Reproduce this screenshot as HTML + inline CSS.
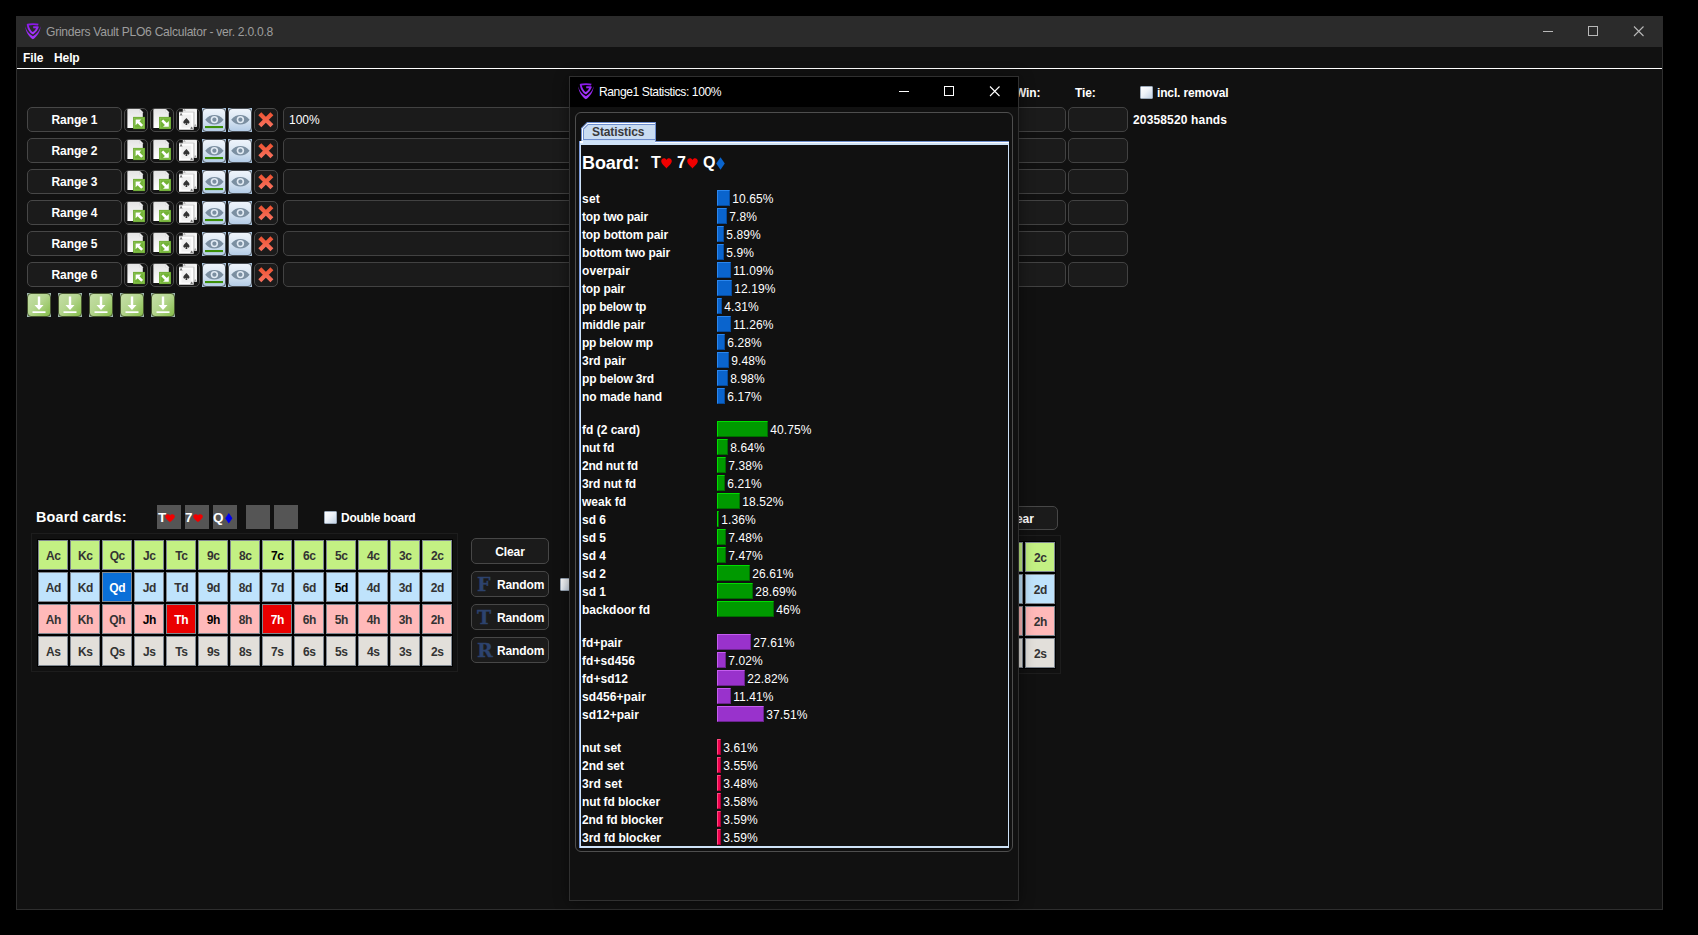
<!DOCTYPE html><html lang="en"><head><meta charset="utf-8"><title>Grinders Vault PLO6 Calculator</title><style>
*{box-sizing:border-box;margin:0;padding:0}
html,body{width:1698px;height:935px;overflow:hidden;background:#000}
body{position:relative;font-family:"Liberation Sans",sans-serif;font-size:12px;color:#fff;line-height:1}
.a{position:absolute}
.b{font-weight:bold;letter-spacing:-.1px}
.t{position:absolute;white-space:nowrap;line-height:14px;height:14px}
#win{position:absolute;left:16px;top:16px;width:1647px;height:894px;background:#111;border:1px solid #2e2e2e;border-top:none}
#tb{position:absolute;left:16px;top:16px;width:1647px;height:31px;background:#2b2b2b}
#ttl{position:absolute;left:46px;top:25px;font-size:12.1px;letter-spacing:-.27px;color:#9d9d9d;white-space:nowrap;line-height:14px}
#mline{position:absolute;left:17px;top:68px;width:1645px;height:1px;background:#fff}
.btn{position:absolute;padding-top:1px;letter-spacing:-.12px;background:#1b1b1b;border:1px solid #474747;border-radius:5px;font-weight:bold;text-align:center;white-space:nowrap}
.fld{position:absolute;background:#1b1b1b;border:1px solid #424242;border-radius:5px;height:25px}
.ib{position:absolute;width:24px;height:24px;border:1px solid #4a4a4a;border-radius:5px;background:#151515;overflow:hidden}
.eb{position:absolute;width:24px;height:24px;background:#a9c4de}
.eb i{position:absolute;left:0;top:0;width:24px;height:24px;border:1px solid #4a4f55;border-radius:4px;background:linear-gradient(#eef4fb,#dbe7f3 45%,#b4cce6)}
.gb{position:absolute;width:24px;height:24px;background:#9fb7b0}
.gb i{position:absolute;left:0;top:0;width:24px;height:24px;border:1px solid #46552f;border-radius:4px;background:linear-gradient(135deg,#c4dea6 0%,#b5d690 45%,#86bd4a 100%)}
svg{position:absolute;left:0;top:0;overflow:visible}
.cb{position:absolute;width:13px;height:13px;border:1px solid #9aa8b8;border-radius:1px;background:linear-gradient(135deg,#ffffff 0%,#eef3f9 45%,#c3d3e6 100%)}
.slot{position:absolute;width:24px;height:24px;background:#555;top:505px}
.cd{position:absolute;width:32px;height:32px;border:1px solid #000;font-weight:bold;text-align:center;color:#333}
.cd b{display:block;width:30px;height:30px;border:1px solid #7f8790;line-height:30px;font-size:12px;letter-spacing:-.4px;text-indent:.6px}
.cc b{background:#c3f083}.dd b{background:#bfe3fc}.hh b{background:#ffb9b9}.ss b{background:#e2dfda}
.k{color:#000}
#dlg{position:absolute;left:569px;top:76px;width:450px;height:825px;background:#111;border:1px solid #303030;box-shadow:0 2px 14px rgba(0,0,0,.45)}
#dtb{position:absolute;left:570px;top:77px;width:448px;height:30px;background:#000}
#dpn{position:absolute;left:575px;top:112px;width:438px;height:740px;border:1px solid #4e4e4e;border-radius:6px}
.lb{position:absolute;left:582px;letter-spacing:-.07px;font-weight:bold;white-space:nowrap;line-height:14px;height:14px}
.vl{position:absolute;letter-spacing:.22px;white-space:nowrap;line-height:14px;height:14px}
.bar{position:absolute;left:717px;height:16px;border-style:solid;border-width:1px}
.b1{background:#0a64cd;border-color:#2a86ee #074a9a #074a9a #2a86ee}
.b2{background:#009900;border-color:#00dd00 #006b00 #006b00 #00dd00}
.b3{background:#9932cc;border-color:#c45cf0 #6b238e #6b238e #c45cf0}
.b4{background:#f0004e;border-color:#ff4a80 #a80036 #a80036 #ff4a80}
</style></head><body>
<div id="win"></div><div id="tb"></div>
<svg class="a" style="left:25px;top:23px" width="16" height="17" viewBox="0 0 16 17"><defs><linearGradient id="lg1" x1="0" y1="0" x2="0" y2="1"><stop offset="0" stop-color="#8a18e8"/><stop offset="1" stop-color="#a638ff"/></linearGradient></defs><path d="M0.2 3.2 C1.2 7.5 3.8 11 7.9 13.2 C12 11 14.6 7.5 15.7 3.2 C15.2 8.6 12.4 13.4 7.9 16.3 C3.4 13.4 0.7 8.6 0.2 3.2Z" fill="url(#lg1)"/><path d="M13.3 1.6 C11.5 0.9 4.5 0.9 2.7 1.6 C3.3 5.6 5 8.6 7.9 10.4 C10.2 9 11.8 6.8 12.8 4.200 L8.200 4.200" fill="none" stroke="url(#lg1)" stroke-width="1.9" stroke-linejoin="round"/></svg>
<div id="ttl">Grinders Vault PLO6 Calculator - ver. 2.0.0.8</div>
<svg class="a" style="left:1530px;top:16px" width="133" height="31" viewBox="0 0 133 31"><g stroke="#b8b8b8" stroke-width="1" fill="none" shape-rendering="crispEdges"><path d="M13 15.5h10"/><rect x="58.5" y="10.5" width="9" height="9"/></g><path d="M104 10.5l9.5 9.5M113.5 10.5l-9.5 9.5" stroke="#b8b8b8" stroke-width="1.1" fill="none"/></svg>
<div class="t b" style="left:23px;top:51px">File</div><div class="t b" style="left:54px;top:51px">Help</div>
<div id="mline"></div>
<div class="btn" style="left:27px;top:107px;width:95px;height:25px;line-height:23px">Range 1</div>
<div class="ib" style="left:124px;top:108px"><svg width="22" height="22" viewBox="0 0 22 22"><defs><linearGradient id="dg" x1="0" y1="0" x2="0" y2="1"><stop offset="0" stop-color="#e4e4e4"/><stop offset="1" stop-color="#fefefe"/></linearGradient></defs><path d="M2.400 0h12.200l3.200 3.200v15.800h-15.400z" fill="url(#dg)"/><path d="M14.600 0v3.200h3.200z" fill="#f6f6f6" stroke="#cfcfcf" stroke-width=".5"/><rect x="8.100" y="7.900" width="11.900" height="12.200" fill="#65a52b"/><rect x="9.200" y="9" width="9.700" height="10" fill="#72b336" stroke="#93c95c" stroke-width=".7"/><path d="M10.600 10.400h5.800l-1.900 1.900 3.600 3.600-1.900 1.900-3.600-3.600-2 2z" fill="#fff"/></svg></div>
<div class="ib" style="left:150px;top:108px"><svg width="22" height="22" viewBox="0 0 22 22"><defs><linearGradient id="dg" x1="0" y1="0" x2="0" y2="1"><stop offset="0" stop-color="#e4e4e4"/><stop offset="1" stop-color="#fefefe"/></linearGradient></defs><path d="M2.400 0h12.200l3.200 3.200v15.800h-15.400z" fill="url(#dg)"/><path d="M14.600 0v3.200h3.200z" fill="#f6f6f6" stroke="#cfcfcf" stroke-width=".5"/><rect x="8.100" y="7.900" width="11.900" height="12.200" fill="#65a52b"/><rect x="9.200" y="9" width="9.700" height="10" fill="#72b336" stroke="#93c95c" stroke-width=".7"/><path d="M17.800 17.800h-5.800l1.900-1.900-3.600-3.600 1.900-1.900 3.600 3.600 2-2z" fill="#fff"/></svg></div>
<div class="ib" style="left:176px;top:108px"><svg width="22" height="22" viewBox="0 0 22 22"><path d="M5.800 -.3h14v18h-14z" fill="#efefef"/><path d="M18.400 -.3h1.400v18h-1.400z" fill="#fafafa"/><path d="M2 3.300h14.700v17.500h-14.700z" fill="#fdfdfd"/><path d="M16.900 3v15" stroke="#b9b9b9" stroke-width=".9"/><path d="M2 3.100h15" stroke="#c8c8c8" stroke-width=".7"/><rect x="4.500" y="5.600" width="9.800" height="13" fill="#f0f0f0"/><path d="M9.400 9c1.500 1.700 3.100 2.900 3.100 4.200 0 1-.9 1.600-1.800 1.400-.4-.1-.7-.3-.9-.6l.6 2h-2l.6-2c-.2.300-.5.500-.9.600-.9.200-1.800-.4-1.800-1.400 0-1.300 1.600-2.500 3.100-4.200z" fill="#333"/><path d="M3.200 6.600l.9-2.200.9 2.200M3.500 5.900h1.200" stroke="#555" stroke-width=".7" fill="none"/><path d="M13.700 20.100l.9-2.200.9 2.200M14 19.400h1.200" stroke="#555" stroke-width=".7" fill="none"/><path d="M17.600 17.400l.7-1.800.7 1.800" stroke="#777" stroke-width=".6" fill="none"/><path d="M6.600 2.100l.8-1.700.8 1.700" stroke="#888" stroke-width=".6" fill="none"/></svg></div>
<div class="eb" style="left:202px;top:108px"><i></i><svg width="24" height="24" viewBox="0 0 24 24"><path d="M3.200 11.700C6 8.200 9 7 12.400 7s6.400 1.200 9.200 4.700c-2.800 3.500-5.800 4.700-9.200 4.700s-6.400-1.200-9.200-4.700z" fill="#7b8fa1"/><circle cx="12.400" cy="11.600" r="3.700" fill="#e2ebf4"/><circle cx="12.400" cy="11.700" r="2.100" fill="#7b8fa1"/><rect x="3" y="18" width="18" height="2.100" fill="#3c8f0a"/></svg></div>
<div class="eb" style="left:228px;top:108px"><i></i><svg width="24" height="24" viewBox="0 0 24 24"><path d="M3.200 11.700C6 8.200 9 7 12.400 7s6.400 1.200 9.200 4.700c-2.800 3.500-5.800 4.700-9.200 4.700s-6.400-1.200-9.200-4.700z" fill="#7b8fa1"/><circle cx="12.400" cy="11.600" r="3.700" fill="#e2ebf4"/><circle cx="12.400" cy="11.700" r="2.100" fill="#7b8fa1"/></svg></div>
<div class="ib" style="left:254px;top:108px;background:#1b1b1b"><svg width="22" height="22" viewBox="0 0 22 22"><defs><linearGradient id="xg" x1="0" y1="0" x2="0" y2="1"><stop offset="0" stop-color="#ee5535"/><stop offset="1" stop-color="#f8705c"/></linearGradient></defs><path d="M4.800 4.700l12.100 12.100M16.900 4.700l-12.100 12.100" stroke="url(#xg)" stroke-width="4.200" fill="none"/></svg></div>
<div class="fld" style="left:283px;top:107px;width:720px"></div>
<div class="fld" style="left:1006px;top:107px;width:60px"></div>
<div class="fld" style="left:1068px;top:107px;width:60px"></div>
<div class="btn" style="left:27px;top:138px;width:95px;height:25px;line-height:23px">Range 2</div>
<div class="ib" style="left:124px;top:139px"><svg width="22" height="22" viewBox="0 0 22 22"><defs><linearGradient id="dg" x1="0" y1="0" x2="0" y2="1"><stop offset="0" stop-color="#e4e4e4"/><stop offset="1" stop-color="#fefefe"/></linearGradient></defs><path d="M2.400 0h12.200l3.200 3.200v15.800h-15.400z" fill="url(#dg)"/><path d="M14.600 0v3.200h3.200z" fill="#f6f6f6" stroke="#cfcfcf" stroke-width=".5"/><rect x="8.100" y="7.900" width="11.900" height="12.200" fill="#65a52b"/><rect x="9.200" y="9" width="9.700" height="10" fill="#72b336" stroke="#93c95c" stroke-width=".7"/><path d="M10.600 10.400h5.800l-1.900 1.900 3.600 3.600-1.900 1.900-3.600-3.600-2 2z" fill="#fff"/></svg></div>
<div class="ib" style="left:150px;top:139px"><svg width="22" height="22" viewBox="0 0 22 22"><defs><linearGradient id="dg" x1="0" y1="0" x2="0" y2="1"><stop offset="0" stop-color="#e4e4e4"/><stop offset="1" stop-color="#fefefe"/></linearGradient></defs><path d="M2.400 0h12.200l3.200 3.200v15.800h-15.400z" fill="url(#dg)"/><path d="M14.600 0v3.200h3.200z" fill="#f6f6f6" stroke="#cfcfcf" stroke-width=".5"/><rect x="8.100" y="7.900" width="11.900" height="12.200" fill="#65a52b"/><rect x="9.200" y="9" width="9.700" height="10" fill="#72b336" stroke="#93c95c" stroke-width=".7"/><path d="M17.800 17.800h-5.800l1.900-1.900-3.600-3.600 1.900-1.900 3.600 3.600 2-2z" fill="#fff"/></svg></div>
<div class="ib" style="left:176px;top:139px"><svg width="22" height="22" viewBox="0 0 22 22"><path d="M5.800 -.3h14v18h-14z" fill="#efefef"/><path d="M18.400 -.3h1.400v18h-1.400z" fill="#fafafa"/><path d="M2 3.300h14.700v17.500h-14.700z" fill="#fdfdfd"/><path d="M16.900 3v15" stroke="#b9b9b9" stroke-width=".9"/><path d="M2 3.100h15" stroke="#c8c8c8" stroke-width=".7"/><rect x="4.500" y="5.600" width="9.800" height="13" fill="#f0f0f0"/><path d="M9.400 9c1.500 1.700 3.100 2.900 3.100 4.200 0 1-.9 1.600-1.800 1.400-.4-.1-.7-.3-.9-.6l.6 2h-2l.6-2c-.2.300-.5.500-.9.600-.9.200-1.800-.4-1.800-1.400 0-1.300 1.600-2.500 3.100-4.200z" fill="#333"/><path d="M3.200 6.600l.9-2.200.9 2.200M3.500 5.900h1.200" stroke="#555" stroke-width=".7" fill="none"/><path d="M13.700 20.100l.9-2.200.9 2.200M14 19.400h1.200" stroke="#555" stroke-width=".7" fill="none"/><path d="M17.600 17.400l.7-1.800.7 1.800" stroke="#777" stroke-width=".6" fill="none"/><path d="M6.600 2.100l.8-1.700.8 1.700" stroke="#888" stroke-width=".6" fill="none"/></svg></div>
<div class="eb" style="left:202px;top:139px"><i></i><svg width="24" height="24" viewBox="0 0 24 24"><path d="M3.200 11.700C6 8.200 9 7 12.400 7s6.400 1.200 9.200 4.700c-2.800 3.500-5.800 4.700-9.200 4.700s-6.400-1.200-9.200-4.700z" fill="#7b8fa1"/><circle cx="12.400" cy="11.600" r="3.700" fill="#e2ebf4"/><circle cx="12.400" cy="11.700" r="2.100" fill="#7b8fa1"/><rect x="3" y="18" width="18" height="2.100" fill="#3c8f0a"/></svg></div>
<div class="eb" style="left:228px;top:139px"><i></i><svg width="24" height="24" viewBox="0 0 24 24"><path d="M3.200 11.700C6 8.200 9 7 12.400 7s6.400 1.200 9.200 4.700c-2.800 3.500-5.800 4.700-9.200 4.700s-6.400-1.200-9.200-4.700z" fill="#7b8fa1"/><circle cx="12.400" cy="11.600" r="3.700" fill="#e2ebf4"/><circle cx="12.400" cy="11.700" r="2.100" fill="#7b8fa1"/></svg></div>
<div class="ib" style="left:254px;top:139px;background:#1b1b1b"><svg width="22" height="22" viewBox="0 0 22 22"><defs><linearGradient id="xg" x1="0" y1="0" x2="0" y2="1"><stop offset="0" stop-color="#ee5535"/><stop offset="1" stop-color="#f8705c"/></linearGradient></defs><path d="M4.800 4.700l12.100 12.100M16.900 4.700l-12.100 12.100" stroke="url(#xg)" stroke-width="4.200" fill="none"/></svg></div>
<div class="fld" style="left:283px;top:138px;width:720px"></div>
<div class="fld" style="left:1006px;top:138px;width:60px"></div>
<div class="fld" style="left:1068px;top:138px;width:60px"></div>
<div class="btn" style="left:27px;top:169px;width:95px;height:25px;line-height:23px">Range 3</div>
<div class="ib" style="left:124px;top:170px"><svg width="22" height="22" viewBox="0 0 22 22"><defs><linearGradient id="dg" x1="0" y1="0" x2="0" y2="1"><stop offset="0" stop-color="#e4e4e4"/><stop offset="1" stop-color="#fefefe"/></linearGradient></defs><path d="M2.400 0h12.200l3.200 3.200v15.800h-15.400z" fill="url(#dg)"/><path d="M14.600 0v3.200h3.200z" fill="#f6f6f6" stroke="#cfcfcf" stroke-width=".5"/><rect x="8.100" y="7.900" width="11.900" height="12.200" fill="#65a52b"/><rect x="9.200" y="9" width="9.700" height="10" fill="#72b336" stroke="#93c95c" stroke-width=".7"/><path d="M10.600 10.400h5.800l-1.900 1.900 3.600 3.600-1.900 1.900-3.600-3.600-2 2z" fill="#fff"/></svg></div>
<div class="ib" style="left:150px;top:170px"><svg width="22" height="22" viewBox="0 0 22 22"><defs><linearGradient id="dg" x1="0" y1="0" x2="0" y2="1"><stop offset="0" stop-color="#e4e4e4"/><stop offset="1" stop-color="#fefefe"/></linearGradient></defs><path d="M2.400 0h12.200l3.200 3.200v15.800h-15.400z" fill="url(#dg)"/><path d="M14.600 0v3.200h3.200z" fill="#f6f6f6" stroke="#cfcfcf" stroke-width=".5"/><rect x="8.100" y="7.900" width="11.900" height="12.200" fill="#65a52b"/><rect x="9.200" y="9" width="9.700" height="10" fill="#72b336" stroke="#93c95c" stroke-width=".7"/><path d="M17.800 17.800h-5.800l1.900-1.900-3.600-3.600 1.900-1.900 3.600 3.600 2-2z" fill="#fff"/></svg></div>
<div class="ib" style="left:176px;top:170px"><svg width="22" height="22" viewBox="0 0 22 22"><path d="M5.800 -.3h14v18h-14z" fill="#efefef"/><path d="M18.400 -.3h1.400v18h-1.400z" fill="#fafafa"/><path d="M2 3.300h14.700v17.500h-14.700z" fill="#fdfdfd"/><path d="M16.900 3v15" stroke="#b9b9b9" stroke-width=".9"/><path d="M2 3.100h15" stroke="#c8c8c8" stroke-width=".7"/><rect x="4.500" y="5.600" width="9.800" height="13" fill="#f0f0f0"/><path d="M9.400 9c1.500 1.700 3.100 2.900 3.100 4.200 0 1-.9 1.600-1.800 1.400-.4-.1-.7-.3-.9-.6l.6 2h-2l.6-2c-.2.300-.5.500-.9.600-.9.200-1.800-.4-1.800-1.400 0-1.300 1.600-2.500 3.100-4.200z" fill="#333"/><path d="M3.200 6.600l.9-2.200.9 2.200M3.500 5.900h1.200" stroke="#555" stroke-width=".7" fill="none"/><path d="M13.700 20.100l.9-2.200.9 2.200M14 19.400h1.200" stroke="#555" stroke-width=".7" fill="none"/><path d="M17.600 17.400l.7-1.800.7 1.800" stroke="#777" stroke-width=".6" fill="none"/><path d="M6.600 2.100l.8-1.700.8 1.700" stroke="#888" stroke-width=".6" fill="none"/></svg></div>
<div class="eb" style="left:202px;top:170px"><i></i><svg width="24" height="24" viewBox="0 0 24 24"><path d="M3.200 11.700C6 8.200 9 7 12.400 7s6.400 1.200 9.200 4.700c-2.800 3.500-5.800 4.700-9.200 4.700s-6.400-1.200-9.200-4.700z" fill="#7b8fa1"/><circle cx="12.400" cy="11.600" r="3.700" fill="#e2ebf4"/><circle cx="12.400" cy="11.700" r="2.100" fill="#7b8fa1"/><rect x="3" y="18" width="18" height="2.100" fill="#3c8f0a"/></svg></div>
<div class="eb" style="left:228px;top:170px"><i></i><svg width="24" height="24" viewBox="0 0 24 24"><path d="M3.200 11.700C6 8.200 9 7 12.400 7s6.400 1.200 9.200 4.700c-2.800 3.500-5.800 4.700-9.200 4.700s-6.400-1.200-9.200-4.700z" fill="#7b8fa1"/><circle cx="12.400" cy="11.600" r="3.700" fill="#e2ebf4"/><circle cx="12.400" cy="11.700" r="2.100" fill="#7b8fa1"/></svg></div>
<div class="ib" style="left:254px;top:170px;background:#1b1b1b"><svg width="22" height="22" viewBox="0 0 22 22"><defs><linearGradient id="xg" x1="0" y1="0" x2="0" y2="1"><stop offset="0" stop-color="#ee5535"/><stop offset="1" stop-color="#f8705c"/></linearGradient></defs><path d="M4.800 4.700l12.100 12.100M16.900 4.700l-12.100 12.100" stroke="url(#xg)" stroke-width="4.200" fill="none"/></svg></div>
<div class="fld" style="left:283px;top:169px;width:720px"></div>
<div class="fld" style="left:1006px;top:169px;width:60px"></div>
<div class="fld" style="left:1068px;top:169px;width:60px"></div>
<div class="btn" style="left:27px;top:200px;width:95px;height:25px;line-height:23px">Range 4</div>
<div class="ib" style="left:124px;top:201px"><svg width="22" height="22" viewBox="0 0 22 22"><defs><linearGradient id="dg" x1="0" y1="0" x2="0" y2="1"><stop offset="0" stop-color="#e4e4e4"/><stop offset="1" stop-color="#fefefe"/></linearGradient></defs><path d="M2.400 0h12.200l3.200 3.200v15.800h-15.400z" fill="url(#dg)"/><path d="M14.600 0v3.200h3.200z" fill="#f6f6f6" stroke="#cfcfcf" stroke-width=".5"/><rect x="8.100" y="7.900" width="11.900" height="12.200" fill="#65a52b"/><rect x="9.200" y="9" width="9.700" height="10" fill="#72b336" stroke="#93c95c" stroke-width=".7"/><path d="M10.600 10.400h5.800l-1.900 1.900 3.600 3.600-1.900 1.900-3.600-3.600-2 2z" fill="#fff"/></svg></div>
<div class="ib" style="left:150px;top:201px"><svg width="22" height="22" viewBox="0 0 22 22"><defs><linearGradient id="dg" x1="0" y1="0" x2="0" y2="1"><stop offset="0" stop-color="#e4e4e4"/><stop offset="1" stop-color="#fefefe"/></linearGradient></defs><path d="M2.400 0h12.200l3.200 3.200v15.800h-15.400z" fill="url(#dg)"/><path d="M14.600 0v3.200h3.200z" fill="#f6f6f6" stroke="#cfcfcf" stroke-width=".5"/><rect x="8.100" y="7.900" width="11.900" height="12.200" fill="#65a52b"/><rect x="9.200" y="9" width="9.700" height="10" fill="#72b336" stroke="#93c95c" stroke-width=".7"/><path d="M17.800 17.800h-5.800l1.900-1.900-3.600-3.600 1.900-1.900 3.600 3.600 2-2z" fill="#fff"/></svg></div>
<div class="ib" style="left:176px;top:201px"><svg width="22" height="22" viewBox="0 0 22 22"><path d="M5.800 -.3h14v18h-14z" fill="#efefef"/><path d="M18.400 -.3h1.400v18h-1.400z" fill="#fafafa"/><path d="M2 3.300h14.700v17.500h-14.700z" fill="#fdfdfd"/><path d="M16.900 3v15" stroke="#b9b9b9" stroke-width=".9"/><path d="M2 3.100h15" stroke="#c8c8c8" stroke-width=".7"/><rect x="4.500" y="5.600" width="9.800" height="13" fill="#f0f0f0"/><path d="M9.400 9c1.500 1.700 3.100 2.900 3.100 4.200 0 1-.9 1.600-1.800 1.400-.4-.1-.7-.3-.9-.6l.6 2h-2l.6-2c-.2.300-.5.500-.9.600-.9.200-1.800-.4-1.800-1.400 0-1.300 1.600-2.500 3.100-4.200z" fill="#333"/><path d="M3.200 6.600l.9-2.200.9 2.200M3.500 5.900h1.200" stroke="#555" stroke-width=".7" fill="none"/><path d="M13.700 20.100l.9-2.200.9 2.200M14 19.400h1.200" stroke="#555" stroke-width=".7" fill="none"/><path d="M17.600 17.400l.7-1.800.7 1.800" stroke="#777" stroke-width=".6" fill="none"/><path d="M6.600 2.100l.8-1.700.8 1.700" stroke="#888" stroke-width=".6" fill="none"/></svg></div>
<div class="eb" style="left:202px;top:201px"><i></i><svg width="24" height="24" viewBox="0 0 24 24"><path d="M3.200 11.700C6 8.200 9 7 12.400 7s6.400 1.200 9.200 4.700c-2.800 3.500-5.800 4.700-9.200 4.700s-6.400-1.200-9.200-4.700z" fill="#7b8fa1"/><circle cx="12.400" cy="11.600" r="3.700" fill="#e2ebf4"/><circle cx="12.400" cy="11.700" r="2.100" fill="#7b8fa1"/><rect x="3" y="18" width="18" height="2.100" fill="#3c8f0a"/></svg></div>
<div class="eb" style="left:228px;top:201px"><i></i><svg width="24" height="24" viewBox="0 0 24 24"><path d="M3.200 11.700C6 8.200 9 7 12.400 7s6.400 1.200 9.200 4.700c-2.800 3.500-5.800 4.700-9.200 4.700s-6.400-1.200-9.200-4.700z" fill="#7b8fa1"/><circle cx="12.400" cy="11.600" r="3.700" fill="#e2ebf4"/><circle cx="12.400" cy="11.700" r="2.100" fill="#7b8fa1"/></svg></div>
<div class="ib" style="left:254px;top:201px;background:#1b1b1b"><svg width="22" height="22" viewBox="0 0 22 22"><defs><linearGradient id="xg" x1="0" y1="0" x2="0" y2="1"><stop offset="0" stop-color="#ee5535"/><stop offset="1" stop-color="#f8705c"/></linearGradient></defs><path d="M4.800 4.700l12.100 12.100M16.900 4.700l-12.100 12.100" stroke="url(#xg)" stroke-width="4.200" fill="none"/></svg></div>
<div class="fld" style="left:283px;top:200px;width:720px"></div>
<div class="fld" style="left:1006px;top:200px;width:60px"></div>
<div class="fld" style="left:1068px;top:200px;width:60px"></div>
<div class="btn" style="left:27px;top:231px;width:95px;height:25px;line-height:23px">Range 5</div>
<div class="ib" style="left:124px;top:232px"><svg width="22" height="22" viewBox="0 0 22 22"><defs><linearGradient id="dg" x1="0" y1="0" x2="0" y2="1"><stop offset="0" stop-color="#e4e4e4"/><stop offset="1" stop-color="#fefefe"/></linearGradient></defs><path d="M2.400 0h12.200l3.200 3.200v15.800h-15.400z" fill="url(#dg)"/><path d="M14.600 0v3.200h3.200z" fill="#f6f6f6" stroke="#cfcfcf" stroke-width=".5"/><rect x="8.100" y="7.900" width="11.900" height="12.200" fill="#65a52b"/><rect x="9.200" y="9" width="9.700" height="10" fill="#72b336" stroke="#93c95c" stroke-width=".7"/><path d="M10.600 10.400h5.800l-1.900 1.900 3.600 3.600-1.900 1.900-3.600-3.600-2 2z" fill="#fff"/></svg></div>
<div class="ib" style="left:150px;top:232px"><svg width="22" height="22" viewBox="0 0 22 22"><defs><linearGradient id="dg" x1="0" y1="0" x2="0" y2="1"><stop offset="0" stop-color="#e4e4e4"/><stop offset="1" stop-color="#fefefe"/></linearGradient></defs><path d="M2.400 0h12.200l3.200 3.200v15.800h-15.400z" fill="url(#dg)"/><path d="M14.600 0v3.200h3.200z" fill="#f6f6f6" stroke="#cfcfcf" stroke-width=".5"/><rect x="8.100" y="7.900" width="11.900" height="12.200" fill="#65a52b"/><rect x="9.200" y="9" width="9.700" height="10" fill="#72b336" stroke="#93c95c" stroke-width=".7"/><path d="M17.800 17.800h-5.800l1.900-1.900-3.600-3.600 1.900-1.900 3.600 3.600 2-2z" fill="#fff"/></svg></div>
<div class="ib" style="left:176px;top:232px"><svg width="22" height="22" viewBox="0 0 22 22"><path d="M5.800 -.3h14v18h-14z" fill="#efefef"/><path d="M18.400 -.3h1.400v18h-1.400z" fill="#fafafa"/><path d="M2 3.300h14.700v17.500h-14.700z" fill="#fdfdfd"/><path d="M16.900 3v15" stroke="#b9b9b9" stroke-width=".9"/><path d="M2 3.100h15" stroke="#c8c8c8" stroke-width=".7"/><rect x="4.500" y="5.600" width="9.800" height="13" fill="#f0f0f0"/><path d="M9.400 9c1.500 1.700 3.100 2.900 3.100 4.200 0 1-.9 1.600-1.800 1.400-.4-.1-.7-.3-.9-.6l.6 2h-2l.6-2c-.2.300-.5.500-.9.600-.9.200-1.800-.4-1.800-1.400 0-1.300 1.600-2.500 3.100-4.200z" fill="#333"/><path d="M3.200 6.600l.9-2.200.9 2.200M3.500 5.900h1.200" stroke="#555" stroke-width=".7" fill="none"/><path d="M13.700 20.100l.9-2.200.9 2.200M14 19.400h1.200" stroke="#555" stroke-width=".7" fill="none"/><path d="M17.600 17.400l.7-1.800.7 1.800" stroke="#777" stroke-width=".6" fill="none"/><path d="M6.600 2.100l.8-1.700.8 1.700" stroke="#888" stroke-width=".6" fill="none"/></svg></div>
<div class="eb" style="left:202px;top:232px"><i></i><svg width="24" height="24" viewBox="0 0 24 24"><path d="M3.200 11.700C6 8.200 9 7 12.400 7s6.400 1.200 9.200 4.700c-2.800 3.500-5.800 4.700-9.200 4.700s-6.400-1.200-9.200-4.700z" fill="#7b8fa1"/><circle cx="12.400" cy="11.600" r="3.700" fill="#e2ebf4"/><circle cx="12.400" cy="11.700" r="2.100" fill="#7b8fa1"/><rect x="3" y="18" width="18" height="2.100" fill="#3c8f0a"/></svg></div>
<div class="eb" style="left:228px;top:232px"><i></i><svg width="24" height="24" viewBox="0 0 24 24"><path d="M3.200 11.700C6 8.200 9 7 12.400 7s6.400 1.200 9.200 4.700c-2.800 3.500-5.800 4.700-9.200 4.700s-6.400-1.200-9.200-4.700z" fill="#7b8fa1"/><circle cx="12.400" cy="11.600" r="3.700" fill="#e2ebf4"/><circle cx="12.400" cy="11.700" r="2.100" fill="#7b8fa1"/></svg></div>
<div class="ib" style="left:254px;top:232px;background:#1b1b1b"><svg width="22" height="22" viewBox="0 0 22 22"><defs><linearGradient id="xg" x1="0" y1="0" x2="0" y2="1"><stop offset="0" stop-color="#ee5535"/><stop offset="1" stop-color="#f8705c"/></linearGradient></defs><path d="M4.800 4.700l12.100 12.100M16.900 4.700l-12.100 12.100" stroke="url(#xg)" stroke-width="4.200" fill="none"/></svg></div>
<div class="fld" style="left:283px;top:231px;width:720px"></div>
<div class="fld" style="left:1006px;top:231px;width:60px"></div>
<div class="fld" style="left:1068px;top:231px;width:60px"></div>
<div class="btn" style="left:27px;top:262px;width:95px;height:25px;line-height:23px">Range 6</div>
<div class="ib" style="left:124px;top:263px"><svg width="22" height="22" viewBox="0 0 22 22"><defs><linearGradient id="dg" x1="0" y1="0" x2="0" y2="1"><stop offset="0" stop-color="#e4e4e4"/><stop offset="1" stop-color="#fefefe"/></linearGradient></defs><path d="M2.400 0h12.200l3.200 3.200v15.800h-15.400z" fill="url(#dg)"/><path d="M14.600 0v3.200h3.200z" fill="#f6f6f6" stroke="#cfcfcf" stroke-width=".5"/><rect x="8.100" y="7.900" width="11.900" height="12.200" fill="#65a52b"/><rect x="9.200" y="9" width="9.700" height="10" fill="#72b336" stroke="#93c95c" stroke-width=".7"/><path d="M10.600 10.400h5.800l-1.900 1.900 3.600 3.600-1.900 1.900-3.600-3.600-2 2z" fill="#fff"/></svg></div>
<div class="ib" style="left:150px;top:263px"><svg width="22" height="22" viewBox="0 0 22 22"><defs><linearGradient id="dg" x1="0" y1="0" x2="0" y2="1"><stop offset="0" stop-color="#e4e4e4"/><stop offset="1" stop-color="#fefefe"/></linearGradient></defs><path d="M2.400 0h12.200l3.200 3.200v15.800h-15.400z" fill="url(#dg)"/><path d="M14.600 0v3.200h3.200z" fill="#f6f6f6" stroke="#cfcfcf" stroke-width=".5"/><rect x="8.100" y="7.900" width="11.900" height="12.200" fill="#65a52b"/><rect x="9.200" y="9" width="9.700" height="10" fill="#72b336" stroke="#93c95c" stroke-width=".7"/><path d="M17.800 17.800h-5.800l1.900-1.900-3.600-3.600 1.900-1.900 3.600 3.600 2-2z" fill="#fff"/></svg></div>
<div class="ib" style="left:176px;top:263px"><svg width="22" height="22" viewBox="0 0 22 22"><path d="M5.800 -.3h14v18h-14z" fill="#efefef"/><path d="M18.400 -.3h1.400v18h-1.400z" fill="#fafafa"/><path d="M2 3.300h14.700v17.500h-14.700z" fill="#fdfdfd"/><path d="M16.900 3v15" stroke="#b9b9b9" stroke-width=".9"/><path d="M2 3.100h15" stroke="#c8c8c8" stroke-width=".7"/><rect x="4.500" y="5.600" width="9.800" height="13" fill="#f0f0f0"/><path d="M9.400 9c1.500 1.700 3.100 2.900 3.100 4.200 0 1-.9 1.600-1.800 1.400-.4-.1-.7-.3-.9-.6l.6 2h-2l.6-2c-.2.300-.5.500-.9.600-.9.200-1.800-.4-1.800-1.400 0-1.300 1.600-2.500 3.100-4.200z" fill="#333"/><path d="M3.200 6.600l.9-2.200.9 2.200M3.500 5.900h1.200" stroke="#555" stroke-width=".7" fill="none"/><path d="M13.700 20.100l.9-2.200.9 2.200M14 19.400h1.200" stroke="#555" stroke-width=".7" fill="none"/><path d="M17.600 17.400l.7-1.800.7 1.800" stroke="#777" stroke-width=".6" fill="none"/><path d="M6.600 2.100l.8-1.700.8 1.700" stroke="#888" stroke-width=".6" fill="none"/></svg></div>
<div class="eb" style="left:202px;top:263px"><i></i><svg width="24" height="24" viewBox="0 0 24 24"><path d="M3.200 11.700C6 8.200 9 7 12.400 7s6.400 1.200 9.200 4.700c-2.800 3.500-5.800 4.700-9.200 4.700s-6.400-1.200-9.200-4.700z" fill="#7b8fa1"/><circle cx="12.400" cy="11.600" r="3.700" fill="#e2ebf4"/><circle cx="12.400" cy="11.700" r="2.100" fill="#7b8fa1"/><rect x="3" y="18" width="18" height="2.100" fill="#3c8f0a"/></svg></div>
<div class="eb" style="left:228px;top:263px"><i></i><svg width="24" height="24" viewBox="0 0 24 24"><path d="M3.200 11.700C6 8.200 9 7 12.400 7s6.400 1.200 9.200 4.700c-2.800 3.500-5.800 4.700-9.200 4.700s-6.400-1.200-9.200-4.700z" fill="#7b8fa1"/><circle cx="12.400" cy="11.600" r="3.700" fill="#e2ebf4"/><circle cx="12.400" cy="11.700" r="2.100" fill="#7b8fa1"/></svg></div>
<div class="ib" style="left:254px;top:263px;background:#1b1b1b"><svg width="22" height="22" viewBox="0 0 22 22"><defs><linearGradient id="xg" x1="0" y1="0" x2="0" y2="1"><stop offset="0" stop-color="#ee5535"/><stop offset="1" stop-color="#f8705c"/></linearGradient></defs><path d="M4.800 4.700l12.100 12.100M16.900 4.700l-12.100 12.100" stroke="url(#xg)" stroke-width="4.200" fill="none"/></svg></div>
<div class="fld" style="left:283px;top:262px;width:720px"></div>
<div class="fld" style="left:1006px;top:262px;width:60px"></div>
<div class="fld" style="left:1068px;top:262px;width:60px"></div>
<div class="t" style="left:289px;top:113px">100%</div>
<div class="gb" style="left:27px;top:293px"><i></i><svg width="24" height="24" viewBox="0 0 24 24"><path d="M10.800 3.500h2.400v8.500h3.300l-4.500 5-4.500-5h3.300z" fill="#fff"/><rect x="5.500" y="18.300" width="13" height="1.700" fill="#fff"/></svg></div>
<div class="gb" style="left:58px;top:293px"><i></i><svg width="24" height="24" viewBox="0 0 24 24"><path d="M10.800 3.500h2.400v8.500h3.300l-4.500 5-4.500-5h3.300z" fill="#fff"/><rect x="5.500" y="18.300" width="13" height="1.700" fill="#fff"/></svg></div>
<div class="gb" style="left:89px;top:293px"><i></i><svg width="24" height="24" viewBox="0 0 24 24"><path d="M10.800 3.500h2.400v8.500h3.300l-4.500 5-4.500-5h3.300z" fill="#fff"/><rect x="5.500" y="18.300" width="13" height="1.700" fill="#fff"/></svg></div>
<div class="gb" style="left:120px;top:293px"><i></i><svg width="24" height="24" viewBox="0 0 24 24"><path d="M10.800 3.500h2.400v8.500h3.300l-4.500 5-4.500-5h3.300z" fill="#fff"/><rect x="5.500" y="18.300" width="13" height="1.700" fill="#fff"/></svg></div>
<div class="gb" style="left:151px;top:293px"><i></i><svg width="24" height="24" viewBox="0 0 24 24"><path d="M10.800 3.500h2.400v8.500h3.300l-4.500 5-4.500-5h3.300z" fill="#fff"/><rect x="5.500" y="18.300" width="13" height="1.700" fill="#fff"/></svg></div>
<div class="t b" style="left:1015px;top:86px">Win:</div><div class="t b" style="left:1075px;top:86px">Tie:</div>
<div class="cb" style="left:1140px;top:86px"></div><div class="t b" style="left:1157px;top:86px;letter-spacing:-.15px">incl. removal</div>
<div class="t b" style="left:1133px;top:113px;letter-spacing:.15px">20358520 hands</div>
<div class="t b" style="left:36px;top:509px;font-size:14.400px;letter-spacing:.15px;line-height:16px;height:16px">Board cards:</div>
<div class="slot" style="left:157px"></div>
<div class="slot" style="left:185px"></div>
<div class="slot" style="left:213px"></div>
<div class="slot" style="left:246px"></div>
<div class="slot" style="left:274px"></div>
<div class="t b" style="left:158px;top:511px;font-size:13.500px">T</div><svg class="a" style="left:165.4px;top:514px" width="10" height="8.5" preserveAspectRatio="none" viewBox="0 0 10 10"><path d="M5 9.600C3.400 7.400 .2 5.400 .2 2.800.2 1.200 1.400.2 2.700.2 3.700.2 4.600.8 5 1.800 5.400.8 6.300.2 7.300.2 8.600.2 9.800 1.200 9.800 2.800 9.800 5.400 6.600 7.400 5 9.600z" fill="#f00000"/></svg>
<div class="t b" style="left:185px;top:511px;font-size:13.500px">7</div><svg class="a" style="left:193.3px;top:514px" width="10" height="8.5" preserveAspectRatio="none" viewBox="0 0 10 10"><path d="M5 9.600C3.400 7.400 .2 5.400 .2 2.800.2 1.200 1.400.2 2.700.2 3.700.2 4.600.8 5 1.800 5.400.8 6.300.2 7.300.2 8.600.2 9.800 1.200 9.800 2.800 9.800 5.400 6.600 7.400 5 9.600z" fill="#f00000"/></svg>
<div class="t b" style="left:213px;top:511px;font-size:13.500px">Q</div><svg class="a" style="left:224.9px;top:512.8px" width="7.6" height="10.4" preserveAspectRatio="none" viewBox="0 0 8 11"><path d="M4 0L7.800 5.500 4 11 .2 5.500z" fill="#0000f0"/></svg>
<div class="cb" style="left:324px;top:511px"></div><div class="t b" style="left:341px;top:511px;letter-spacing:-.24px">Double board</div>
<div class="a" style="left:31px;top:533px;width:427px;height:139px;border:1px solid #1d1d1d"></div>
<div class="cd cc" style="left:37px;top:539px"><b>Ac</b></div>
<div class="cd cc" style="left:69px;top:539px"><b>Kc</b></div>
<div class="cd cc" style="left:101px;top:539px"><b>Qc</b></div>
<div class="cd cc" style="left:133px;top:539px"><b>Jc</b></div>
<div class="cd cc" style="left:165px;top:539px"><b>Tc</b></div>
<div class="cd cc" style="left:197px;top:539px"><b>9c</b></div>
<div class="cd cc" style="left:229px;top:539px"><b>8c</b></div>
<div class="cd cc" style="left:261px;top:539px"><b class="k">7c</b></div>
<div class="cd cc" style="left:293px;top:539px"><b>6c</b></div>
<div class="cd cc" style="left:325px;top:539px"><b>5c</b></div>
<div class="cd cc" style="left:357px;top:539px"><b>4c</b></div>
<div class="cd cc" style="left:389px;top:539px"><b>3c</b></div>
<div class="cd cc" style="left:421px;top:539px"><b>2c</b></div>
<div class="cd dd" style="left:37px;top:571px"><b>Ad</b></div>
<div class="cd dd" style="left:69px;top:571px"><b>Kd</b></div>
<div class="cd dd" style="left:101px;top:571px"><b style="background:#0a6fd8;color:#fff">Qd</b></div>
<div class="cd dd" style="left:133px;top:571px"><b>Jd</b></div>
<div class="cd dd" style="left:165px;top:571px"><b>Td</b></div>
<div class="cd dd" style="left:197px;top:571px"><b>9d</b></div>
<div class="cd dd" style="left:229px;top:571px"><b>8d</b></div>
<div class="cd dd" style="left:261px;top:571px"><b>7d</b></div>
<div class="cd dd" style="left:293px;top:571px"><b>6d</b></div>
<div class="cd dd" style="left:325px;top:571px"><b class="k">5d</b></div>
<div class="cd dd" style="left:357px;top:571px"><b>4d</b></div>
<div class="cd dd" style="left:389px;top:571px"><b>3d</b></div>
<div class="cd dd" style="left:421px;top:571px"><b>2d</b></div>
<div class="cd hh" style="left:37px;top:603px"><b>Ah</b></div>
<div class="cd hh" style="left:69px;top:603px"><b>Kh</b></div>
<div class="cd hh" style="left:101px;top:603px"><b>Qh</b></div>
<div class="cd hh" style="left:133px;top:603px"><b class="k">Jh</b></div>
<div class="cd hh" style="left:165px;top:603px"><b style="background:#ea0000;color:#fff">Th</b></div>
<div class="cd hh" style="left:197px;top:603px"><b class="k">9h</b></div>
<div class="cd hh" style="left:229px;top:603px"><b>8h</b></div>
<div class="cd hh" style="left:261px;top:603px"><b style="background:#ea0000;color:#fff">7h</b></div>
<div class="cd hh" style="left:293px;top:603px"><b>6h</b></div>
<div class="cd hh" style="left:325px;top:603px"><b>5h</b></div>
<div class="cd hh" style="left:357px;top:603px"><b>4h</b></div>
<div class="cd hh" style="left:389px;top:603px"><b>3h</b></div>
<div class="cd hh" style="left:421px;top:603px"><b>2h</b></div>
<div class="cd ss" style="left:37px;top:635px"><b>As</b></div>
<div class="cd ss" style="left:69px;top:635px"><b>Ks</b></div>
<div class="cd ss" style="left:101px;top:635px"><b>Qs</b></div>
<div class="cd ss" style="left:133px;top:635px"><b>Js</b></div>
<div class="cd ss" style="left:165px;top:635px"><b>Ts</b></div>
<div class="cd ss" style="left:197px;top:635px"><b>9s</b></div>
<div class="cd ss" style="left:229px;top:635px"><b>8s</b></div>
<div class="cd ss" style="left:261px;top:635px"><b>7s</b></div>
<div class="cd ss" style="left:293px;top:635px"><b>6s</b></div>
<div class="cd ss" style="left:325px;top:635px"><b>5s</b></div>
<div class="cd ss" style="left:357px;top:635px"><b>4s</b></div>
<div class="cd ss" style="left:389px;top:635px"><b>3s</b></div>
<div class="cd ss" style="left:421px;top:635px"><b>2s</b></div>
<div class="btn" style="left:471px;top:538px;width:78px;height:26px;line-height:24px">Clear</div>
<div class="btn" style="left:471px;top:571px;width:78px;height:26px;line-height:24px;text-align:left;padding-left:25px">Random</div>
<div class="t b" style="left:477px;top:574px;font-family:&quot;DejaVu Serif&quot;,serif;font-size:19px;line-height:20px;height:20px;color:#2d436e;-webkit-text-stroke:.35px #2b4069">F</div>
<div class="btn" style="left:471px;top:604px;width:78px;height:26px;line-height:24px;text-align:left;padding-left:25px">Random</div>
<div class="t b" style="left:477px;top:607px;font-family:&quot;DejaVu Serif&quot;,serif;font-size:19px;line-height:20px;height:20px;color:#2d436e;-webkit-text-stroke:.35px #2b4069">T</div>
<div class="btn" style="left:471px;top:637px;width:78px;height:26px;line-height:24px;text-align:left;padding-left:25px">Random</div>
<div class="t b" style="left:477px;top:640px;font-family:&quot;DejaVu Serif&quot;,serif;font-size:19px;line-height:20px;height:20px;color:#2d436e;-webkit-text-stroke:.35px #2b4069">R</div>
<div class="cb" style="left:560px;top:578px"></div>
<div class="a" style="left:634px;top:535px;width:427px;height:139px;border:1px solid #1d1d1d"></div>
<div class="cd cc" style="left:992px;top:541px"><b></b></div>
<div class="cd cc" style="left:1024px;top:541px"><b>2c</b></div>
<div class="cd dd" style="left:992px;top:573px"><b></b></div>
<div class="cd dd" style="left:1024px;top:573px"><b>2d</b></div>
<div class="cd hh" style="left:992px;top:605px"><b></b></div>
<div class="cd hh" style="left:1024px;top:605px"><b>2h</b></div>
<div class="cd ss" style="left:992px;top:637px"><b></b></div>
<div class="cd ss" style="left:1024px;top:637px"><b>2s</b></div>
<div class="btn" style="left:980px;top:506px;width:78px;height:24px;line-height:22px">Clear</div>
<div id="dlg"></div><div id="dtb"></div>
<svg class="a" style="left:578px;top:83px" width="16" height="17" viewBox="0 0 16 17"><defs><linearGradient id="lg2" x1="0" y1="0" x2="0" y2="1"><stop offset="0" stop-color="#8a18e8"/><stop offset="1" stop-color="#a638ff"/></linearGradient></defs><path d="M0.2 3.2 C1.2 7.5 3.8 11 7.9 13.2 C12 11 14.6 7.5 15.7 3.2 C15.2 8.6 12.4 13.4 7.9 16.3 C3.4 13.4 0.7 8.6 0.2 3.2Z" fill="url(#lg2)"/><path d="M13.3 1.6 C11.5 0.9 4.5 0.9 2.7 1.6 C3.3 5.6 5 8.6 7.9 10.4 C10.2 9 11.8 6.8 12.8 4.200 L8.200 4.200" fill="none" stroke="url(#lg2)" stroke-width="1.9" stroke-linejoin="round"/></svg>
<div class="t" style="left:599px;top:85px;font-size:12.100px;letter-spacing:-.42px">Range1 Statistics: 100%</div>
<svg class="a" style="left:880px;top:77px" width="138" height="30" viewBox="0 0 138 30"><g stroke="#fff" stroke-width="1" fill="none" shape-rendering="crispEdges"><path d="M19 14.500h10"/><rect x="64.500" y="9.500" width="9" height="9"/></g><path d="M110 9.500l9.500 9.500M119.500 9.500l-9.500 9.500" stroke="#fff" stroke-width="1.100" fill="none"/></svg>
<div id="dpn"></div>
<div class="a" style="left:579px;top:141px;width:430px;height:707px;border-style:solid;border-color:#cfe3f8;border-width:4px 1px 2px 2px"></div>
<div class="a" style="left:579px;top:141px;width:1px;height:707px;background:#7c9ce0"></div>
<div class="a" style="left:655px;top:141px;width:354px;height:1px;background:#6d8dcc"></div>
<div class="a" style="left:655px;top:142px;width:354px;height:1px;background:#fff"></div>
<div class="a" style="left:580px;top:141px;width:3px;height:2px;background:#fff"></div>
<svg class="a" style="left:581px;top:122px" width="75" height="19" viewBox="0 0 75 19" shape-rendering="crispEdges"><path d="M0 19V6L6 0H75V19z" fill="#6d8dcc" shape-rendering="geometricPrecision"/><path d="M1 19V6.400L6.400 1H74V19z" fill="#fff" shape-rendering="geometricPrecision"/><path d="M2 19V6.800L6.800 2H75V19z" fill="#6d8dcc" shape-rendering="geometricPrecision"/><path d="M3 19V7.200L7.200 3H74V19z" fill="#c9dcf2" shape-rendering="geometricPrecision"/><rect x="3" y="17" width="71" height="1" fill="#6d8dcc"/><rect x="1" y="18" width="73" height="1" fill="#c9dcf2"/><rect x="74" y="18" width="1" height="1" fill="#6d8dcc"/></svg>
<div class="t b" style="left:592px;top:125px;color:#3a3a3a">Statistics</div>
<div class="t b" style="left:582px;top:153px;font-size:18px;line-height:20px;height:20px">Board:</div>
<div class="t b" style="left:651px;top:154px;font-size:16px;line-height:18px;height:18px">T</div><svg class="a" style="left:661px;top:157.5px" width="11" height="11" viewBox="0 0 10 10"><path d="M5 9.600C3.400 7.400 .2 5.400 .2 2.800.2 1.200 1.400.2 2.700.2 3.700.2 4.600.8 5 1.800 5.400.8 6.300.2 7.300.2 8.600.2 9.800 1.200 9.800 2.800 9.800 5.400 6.600 7.400 5 9.600z" fill="#f00000"/></svg>
<div class="t b" style="left:677px;top:154px;font-size:16px;line-height:18px;height:18px">7</div><svg class="a" style="left:687px;top:157.5px" width="11" height="11" viewBox="0 0 10 10"><path d="M5 9.600C3.400 7.400 .2 5.400 .2 2.800.2 1.200 1.400.2 2.700.2 3.700.2 4.600.8 5 1.800 5.400.8 6.300.2 7.300.2 8.600.2 9.800 1.200 9.800 2.800 9.800 5.400 6.600 7.400 5 9.600z" fill="#f00000"/></svg>
<div class="t b" style="left:703px;top:154px;font-size:16px;line-height:18px;height:18px">Q</div><svg class="a" style="left:716.2px;top:156.5px" width="9" height="13" viewBox="0 0 8 11"><path d="M4 0L7.800 5.500 4 11 .2 5.500z" fill="#0a64cd"/></svg>
<div class="lb" style="top:192px;letter-spacing:0.22px">set</div>
<div class="bar b1" style="top:190px;width:13px"></div>
<div class="vl" style="top:192px;left:732.2px;letter-spacing:.1px">10.65%</div>
<div class="lb" style="top:210px;letter-spacing:-0.167px">top two pair</div>
<div class="bar b1" style="top:208px;width:10px"></div>
<div class="vl" style="top:210px;left:729.2px;letter-spacing:.1px">7.8%</div>
<div class="lb" style="top:228px;letter-spacing:-0.133px">top bottom pair</div>
<div class="bar b1" style="top:226px;width:7px"></div>
<div class="vl" style="top:228px;left:726.2px;letter-spacing:.1px">5.89%</div>
<div class="lb" style="top:246px;letter-spacing:-0.133px">bottom two pair</div>
<div class="bar b1" style="top:244px;width:7px"></div>
<div class="vl" style="top:246px;left:726.2px;letter-spacing:.1px">5.9%</div>
<div class="lb" style="top:264px;letter-spacing:0.081px">overpair</div>
<div class="bar b1" style="top:262px;width:14px"></div>
<div class="vl" style="top:264px;left:733.2px;letter-spacing:.1px">11.09%</div>
<div class="lb" style="top:282px;letter-spacing:-0.125px">top pair</div>
<div class="bar b1" style="top:280px;width:15px"></div>
<div class="vl" style="top:282px;left:734.2px;letter-spacing:.1px">12.19%</div>
<div class="lb" style="top:300px;letter-spacing:-0.243px">pp below tp</div>
<div class="bar b1" style="top:298px;width:5px"></div>
<div class="vl" style="top:300px;left:724.2px;letter-spacing:.1px">4.31%</div>
<div class="lb" style="top:318px;letter-spacing:-0.093px">middle pair</div>
<div class="bar b1" style="top:316px;width:14px"></div>
<div class="vl" style="top:318px;left:733.2px;letter-spacing:.1px">11.26%</div>
<div class="lb" style="top:336px;letter-spacing:-0.213px">pp below mp</div>
<div class="bar b1" style="top:334px;width:8px"></div>
<div class="vl" style="top:336px;left:727.2px;letter-spacing:.1px">6.28%</div>
<div class="lb" style="top:354px;letter-spacing:-0.002px">3rd pair</div>
<div class="bar b1" style="top:352px;width:12px"></div>
<div class="vl" style="top:354px;left:731.2px;letter-spacing:.1px">9.48%</div>
<div class="lb" style="top:372px;letter-spacing:-0.168px">pp below 3rd</div>
<div class="bar b1" style="top:370px;width:11px"></div>
<div class="vl" style="top:372px;left:730.2px;letter-spacing:.1px">8.98%</div>
<div class="lb" style="top:390px;letter-spacing:-0.112px">no made hand</div>
<div class="bar b1" style="top:388px;width:8px"></div>
<div class="vl" style="top:390px;left:727.2px;letter-spacing:.1px">6.17%</div>
<div class="lb" style="top:423px;letter-spacing:-0.001px">fd (2 card)</div>
<div class="bar b2" style="top:421px;width:51px"></div>
<div class="vl" style="top:423px;left:770.2px;letter-spacing:.1px">40.75%</div>
<div class="lb" style="top:441px;letter-spacing:-0.221px">nut fd</div>
<div class="bar b2" style="top:439px;width:11px"></div>
<div class="vl" style="top:441px;left:730.2px;letter-spacing:.1px">8.64%</div>
<div class="lb" style="top:459px;letter-spacing:-0.2px">2nd nut fd</div>
<div class="bar b2" style="top:457px;width:9px"></div>
<div class="vl" style="top:459px;left:728.2px;letter-spacing:.1px">7.38%</div>
<div class="lb" style="top:477px;letter-spacing:-0.133px">3rd nut fd</div>
<div class="bar b2" style="top:475px;width:8px"></div>
<div class="vl" style="top:477px;left:727.2px;letter-spacing:.1px">6.21%</div>
<div class="lb" style="top:495px;letter-spacing:-0.002px">weak fd</div>
<div class="bar b2" style="top:493px;width:23px"></div>
<div class="vl" style="top:495px;left:742.2px;letter-spacing:.1px">18.52%</div>
<div class="lb" style="top:513px;letter-spacing:-0.003px">sd 6</div>
<div class="bar b2" style="top:511px;width:2px"></div>
<div class="vl" style="top:513px;left:721.2px;letter-spacing:.1px">1.36%</div>
<div class="lb" style="top:531px;letter-spacing:-0.003px">sd 5</div>
<div class="bar b2" style="top:529px;width:9px"></div>
<div class="vl" style="top:531px;left:728.2px;letter-spacing:.1px">7.48%</div>
<div class="lb" style="top:549px;letter-spacing:-0.003px">sd 4</div>
<div class="bar b2" style="top:547px;width:9px"></div>
<div class="vl" style="top:549px;left:728.2px;letter-spacing:.1px">7.47%</div>
<div class="lb" style="top:567px;letter-spacing:-0.003px">sd 2</div>
<div class="bar b2" style="top:565px;width:33px"></div>
<div class="vl" style="top:567px;left:752.2px;letter-spacing:.1px">26.61%</div>
<div class="lb" style="top:585px;letter-spacing:-0.003px">sd 1</div>
<div class="bar b2" style="top:583px;width:36px"></div>
<div class="vl" style="top:585px;left:755.2px;letter-spacing:.1px">28.69%</div>
<div class="lb" style="top:603px;letter-spacing:-0.061px">backdoor fd</div>
<div class="bar b2" style="top:601px;width:57px"></div>
<div class="vl" style="top:603px;left:776.2px;letter-spacing:.1px">46%</div>
<div class="lb" style="top:636px;letter-spacing:-0.049px">fd+pair</div>
<div class="bar b3" style="top:634px;width:34px"></div>
<div class="vl" style="top:636px;left:753.2px;letter-spacing:.1px">27.61%</div>
<div class="lb" style="top:654px;letter-spacing:0.08px">fd+sd456</div>
<div class="bar b3" style="top:652px;width:9px"></div>
<div class="vl" style="top:654px;left:728.2px;letter-spacing:.1px">7.02%</div>
<div class="lb" style="top:672px;letter-spacing:0.045px">fd+sd12</div>
<div class="bar b3" style="top:670px;width:28px"></div>
<div class="vl" style="top:672px;left:747.2px;letter-spacing:.1px">22.82%</div>
<div class="lb" style="top:690px;letter-spacing:0.096px">sd456+pair</div>
<div class="bar b3" style="top:688px;width:14px"></div>
<div class="vl" style="top:690px;left:733.2px;letter-spacing:.1px">11.41%</div>
<div class="lb" style="top:708px;letter-spacing:0.071px">sd12+pair</div>
<div class="bar b3" style="top:706px;width:47px"></div>
<div class="vl" style="top:708px;left:766.2px;letter-spacing:.1px">37.51%</div>
<div class="lb" style="top:741px;letter-spacing:-0.048px">nut set</div>
<div class="bar b4" style="top:739px;width:4px"></div>
<div class="vl" style="top:741px;left:723.2px;letter-spacing:.1px">3.61%</div>
<div class="lb" style="top:759px;letter-spacing:-0.002px">2nd set</div>
<div class="bar b4" style="top:757px;width:4px"></div>
<div class="vl" style="top:759px;left:723.2px;letter-spacing:.1px">3.55%</div>
<div class="lb" style="top:777px;letter-spacing:0.093px">3rd set</div>
<div class="bar b4" style="top:775px;width:4px"></div>
<div class="vl" style="top:777px;left:723.2px;letter-spacing:.1px">3.48%</div>
<div class="lb" style="top:795px;letter-spacing:-0.096px">nut fd blocker</div>
<div class="bar b4" style="top:793px;width:4px"></div>
<div class="vl" style="top:795px;left:723.2px;letter-spacing:.1px">3.58%</div>
<div class="lb" style="top:813px;letter-spacing:-0.073px">2nd fd blocker</div>
<div class="bar b4" style="top:811px;width:4px"></div>
<div class="vl" style="top:813px;left:723.2px;letter-spacing:.1px">3.59%</div>
<div class="lb" style="top:831px;letter-spacing:-0.025px">3rd fd blocker</div>
<div class="bar b4" style="top:829px;width:4px"></div>
<div class="vl" style="top:831px;left:723.2px;letter-spacing:.1px">3.59%</div>
</body></html>
